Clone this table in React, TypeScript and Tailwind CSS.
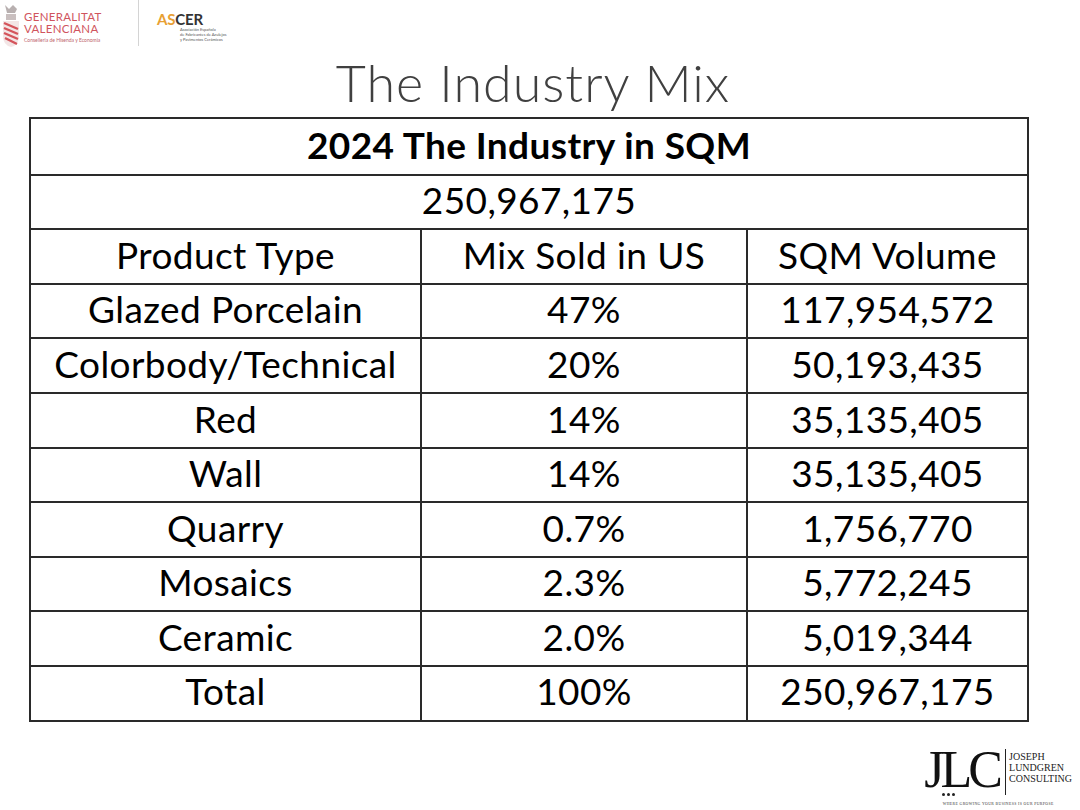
import React from 'react'

/**
 * Industry mix slide
 * Header logos, title and the SQM table
 */

interface MixRow {
  type: string
  mix: string
  volume: string
}

const rows: MixRow[] = [
  { type: 'Glazed Porcelain', mix: '47%', volume: '117,954,572' },
  { type: 'Colorbody/Technical', mix: '20%', volume: '50,193,435' },
  { type: 'Red', mix: '14%', volume: '35,135,405' },
  { type: 'Wall', mix: '14%', volume: '35,135,405' },
  { type: 'Quarry', mix: '0.7%', volume: '1,756,770' },
  { type: 'Mosaics', mix: '2.3%', volume: '5,772,245' },
  { type: 'Ceramic', mix: '2.0%', volume: '5,019,344' },
  { type: 'Total', mix: '100%', volume: '250,967,175' },
]

function Crest() {
  return (
    <svg width="20" height="46" viewBox="0 0 20 46">
      <path d="M4 2 L8 6 L12 2 L16 6 L14 10 L6 10 Z" fill="#b8b0b0" />
      <rect x="5" y="11" width="10" height="6" fill="#c9bfbf" />
      <path d="M2 18 H18 V33 Q18 42 10 44 Q2 42 2 33 Z" fill="#f3e5e5" />
      <path d="M3 20 L17 26 M3 25 L17 31 M3 30 L17 36 M4 35 L16 41" stroke="#d4545b" strokeWidth="2.4" />
    </svg>
  )
}

function HeaderLogos() {
  return (
    <div className="flex items-start h-[50px] pt-[3px]">
      <div className="w-[138px] flex items-start gap-[3px] pl-[1px]">
        <Crest />
        <div className="flex flex-col pt-[8px]">
          <span className="text-[11.5px] leading-[12px] tracking-[0.3px] text-[#d0545d]">GENERALITAT</span>
          <span className="text-[11.5px] leading-[12px] tracking-[0.3px] text-[#d0545d]">VALENCIANA</span>
          <span className="text-[5px] leading-[11px] text-[#c0656b] whitespace-nowrap">Conselleria de Hisenda y Economia</span>
        </div>
      </div>
      <div className="w-px h-[46px] -mt-[3px] bg-[#d4d4d4]" />
      <div className="ml-[18px] flex flex-col pt-[9px]">
        <span className="text-[15px] leading-[15px] font-bold tracking-[-0.2px]">
          <span className="text-[#e8a033]">AS</span>
          <span className="text-[#333]">CER</span>
        </span>
        <div className="pl-[23px] flex flex-col text-[4px] leading-[5px] text-[#555] whitespace-nowrap">
          <span>Asociación Española</span>
          <span>de Fabricantes de Azulejos</span>
          <span>y Pavimentos Cerámicos</span>
        </div>
      </div>
    </div>
  )
}

function JlcLogo() {
  return (
    <div className="flex flex-col items-center">
      <div className="flex items-stretch">
        <div className="flex flex-col">
          <span className="font-['Liberation_Serif',serif] text-[52px] leading-[44px] tracking-[-4px] text-[#111]">JLC</span>
          <div className="flex gap-[2px] pl-[18px] mt-[1px]">
            <div className="w-[3px] h-[3px] rounded-full bg-[#222]" />
            <div className="w-[3px] h-[3px] rounded-full bg-[#222]" />
            <div className="w-[3px] h-[3px] rounded-full bg-[#222]" />
          </div>
        </div>
        <div className="w-px bg-[#222] ml-[6px] mr-[3px] my-[1px]" />
        <div className="flex flex-col pt-[3px] font-['Liberation_Serif',serif] text-[10px] leading-[11px] text-[#222]">
          <span>JOSEPH</span>
          <span>LUNDGREN</span>
          <span>CONSULTING</span>
        </div>
      </div>
      <span className="mt-[6px] font-['Liberation_Serif',serif] text-[3.8px] leading-[5px] tracking-[0.4px] text-[#333] whitespace-nowrap">
        WHERE GROWING YOUR BUSINESS IS OUR PURPOSE
      </span>
    </div>
  )
}

export default function App() {
  const cell = 'h-[54.6px] pb-[4px] flex items-center justify-center border-[#2a2a2a] text-[37px] tracking-[0.4px]'

  return (
    <div className="w-[1080px] h-[810px] bg-white overflow-hidden font-['Lato',sans-serif] text-black">
      <HeaderLogos />

      {/* Title */}
      <h1 className="text-center pr-[14px] text-[52px] leading-[64px] tracking-[1px] font-light text-[#404040] h-[67px]">
        The Industry Mix
      </h1>

      {/* Table */}
      <div className="ml-[29px] w-[1000px] border-2 border-[#2a2a2a]">
        <div className={`${cell} font-bold`}>2024 The Industry in SQM</div>
        <div className={`${cell} border-t-2`}>250,967,175</div>
        <div className="grid grid-cols-[389px_326px_1fr]">
          <div className={`${cell} border-t-2`}>Product Type</div>
          <div className={`${cell} border-t-2 border-l-2`}>Mix Sold in US</div>
          <div className={`${cell} border-t-2 border-l-2`}>SQM Volume</div>
          {rows.map((r) => (
            <React.Fragment key={r.type}>
              <div className={`${cell} border-t-2`}>{r.type}</div>
              <div className={`${cell} border-t-2 border-l-2`}>{r.mix}</div>
              <div className={`${cell} border-t-2 border-l-2`}>{r.volume}</div>
            </React.Fragment>
          ))}
        </div>
      </div>

      <div className="flex justify-end pr-[8px] mt-[26px]">
        <JlcLogo />
      </div>
    </div>
  )
}
